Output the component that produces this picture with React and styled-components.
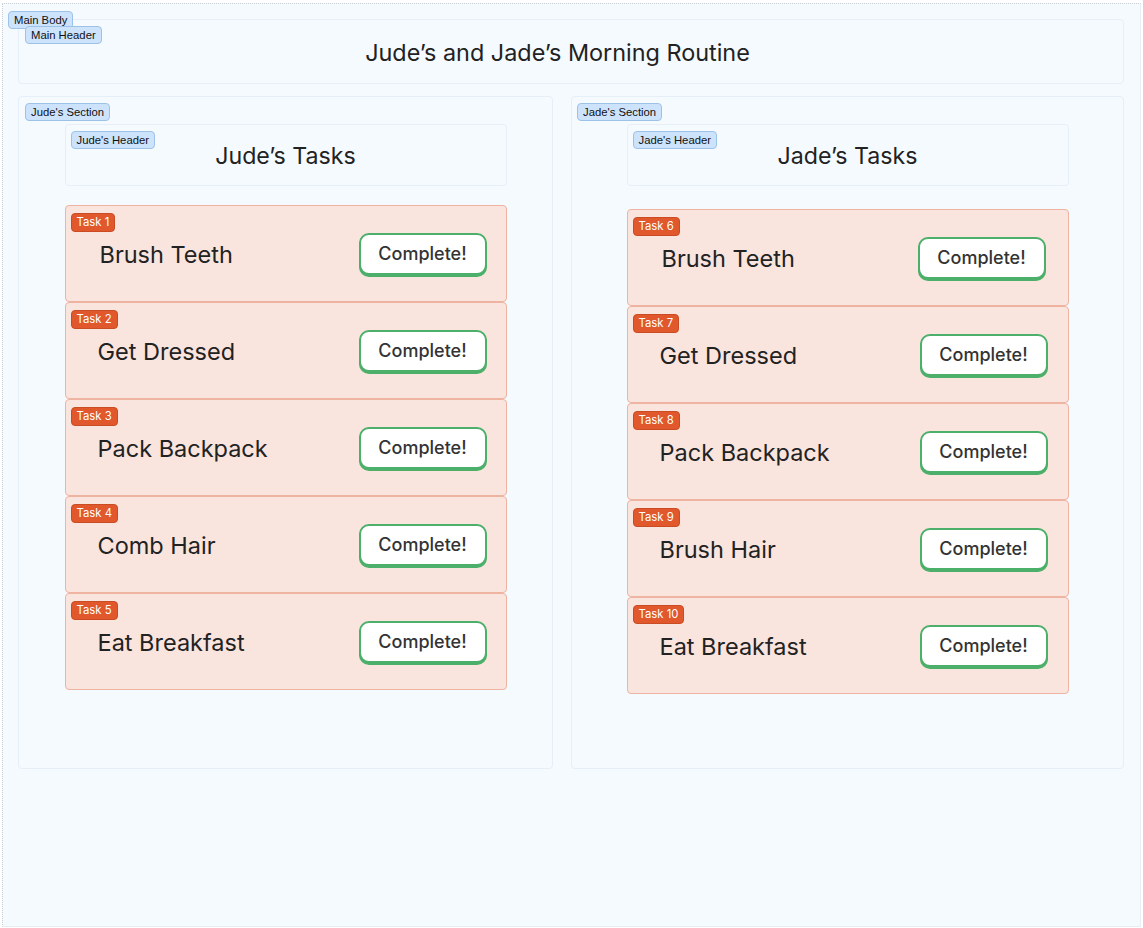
import React from "react";
import styled, { createGlobalStyle } from "styled-components";

const Global = createGlobalStyle`
  html, body { margin: 0; padding: 0; background: #ffffff; }
  body { font-family: Inter, "Noto Sans", Arial, sans-serif; color: #222; }
`;

const Page = styled.div`
  width: 1143px;
  height: 928px;
  padding: 2px;
  box-sizing: border-box;
`;

const MainBody = styled.div`
  position: relative;
  box-sizing: border-box;
  width: 1139px;
  height: 924px;
  margin-top: 1px;
  background: #f5faff;
  border-top: 1px dotted #c9ced6;
  border-left: 1px dotted #c9ced6;
  border-right: 1px solid #e8eef6;
  border-bottom: 1px solid #e8eef6;
  padding: 15px 16px 0 15px;
  display: flex;
  flex-direction: column;
  gap: 12px;
`;

const Tag = styled.span`
  position: absolute;
  left: ${(p) => p.$left ?? 6}px;
  top: ${(p) => p.$top ?? 6}px;
  z-index: 2;
  font-family: "Liberation Sans", Arial, sans-serif;
  font-size: 11.3px;
  line-height: 16px;
  padding: 0 5px;
  background: #cde3fb;
  border: 1px solid #9dc2e8;
  border-radius: 4px;
  color: #111;
  white-space: nowrap;
`;

const Box = styled.div`
  position: relative;
  box-sizing: border-box;
  background: #f5faff;
  border: 1px solid #e6eef7;
  border-radius: 4px;
`;

const MainHeader = styled(Box)`
  height: 65px;
  display: flex;
  align-items: center;
  justify-content: center;
  padding-right: 27px;
`;

const Title = styled.h1`
  margin: 0;
  font-size: 23.4px;
  font-weight: 400;
  color: #222;
  transform: translateY(1px);
`;

const Sections = styled.div`
  display: flex;
  gap: 18px;
`;

const Section = styled(Box)`
  width: ${(p) => p.$width}px;
  height: 673px;
  padding-top: 27px;
  display: flex;
  flex-direction: column;
  align-items: center;
  gap: ${(p) => p.$gap}px;
`;

const SectionHeader = styled(Box)`
  width: 442px;
  height: 62px;
  display: flex;
  align-items: center;
  justify-content: center;
`;

const SubTitle = styled.h2`
  margin: 0;
  font-size: 23.2px;
  font-weight: 400;
  color: #222;
  transform: translateY(1px);
`;

const TaskList = styled.div`
  width: 442px;
  display: flex;
  flex-direction: column;
`;

const Task = styled.div`
  position: relative;
  box-sizing: border-box;
  height: 97px;
  background: #f9e4de;
  border: 1px solid #efb3a1;
  border-radius: 4px;
  display: flex;
  align-items: center;
  justify-content: space-between;
  padding: 2px ${(p) => p.$right}px 0 ${(p) => p.$indent}px;
`;

const TaskTag = styled.span`
  position: absolute;
  left: 5px;
  top: 7px;
  font-family: Inter, Arial, sans-serif;
  font-size: 11.3px;
  line-height: 17px;
  padding: 0 5px;
  background: #e0582b;
  border: 1px solid #c94c22;
  border-radius: 4px;
  color: #fff;
`;

const TaskName = styled.span`
  font-size: 23.5px;
  color: #222;
`;

const CompleteButton = styled.button`
  box-sizing: border-box;
  width: 128px;
  height: 42px;
  background: #fff;
  border: 2px solid #4caf6a;
  border-radius: 10px;
  box-shadow: 0 2px 0 #4caf6a;
  font-family: Inter, Arial, sans-serif;
  font-size: 18px;
  font-weight: 500;
  color: #333;
  cursor: pointer;
  padding: 0;
  margin-top: -2px;
`;

const jude = ["Brush Teeth", "Get Dressed", "Pack Backpack", "Comb Hair", "Eat Breakfast"];
const jade = ["Brush Teeth", "Get Dressed", "Pack Backpack", "Brush Hair", "Eat Breakfast"];

function TaskColumn({ tasks, start, right, firstRight }) {
  return (
    <TaskList>
      {tasks.map((t, i) => (
        <Task key={i} $indent={i === 0 ? 34 : 32} $right={i === 0 ? firstRight : right}>
          <TaskTag>Task {start + i}</TaskTag>
          <TaskName>{t}</TaskName>
          <CompleteButton>Complete!</CompleteButton>
        </Task>
      ))}
    </TaskList>
  );
}

export default function App() {
  return (
    <>
      <Global />
      <Page>
        <MainBody>
          <Tag $left={5} $top={7}>Main Body</Tag>
          <MainHeader>
            <Tag $left={6} $top={6}>Main Header</Tag>
            <Title>Jude’s and Jade’s Morning Routine</Title>
          </MainHeader>
          <Sections>
            <Section $width={535} $gap={19}>
              <Tag $left={6} $top={6}>Jude's Section</Tag>
              <SectionHeader>
                <Tag $left={5} $top={6}>Jude's Header</Tag>
                <SubTitle>Jude’s Tasks</SubTitle>
              </SectionHeader>
              <TaskColumn tasks={jude} start={1} right={19} firstRight={19} />
            </Section>
            <Section $width={553} $gap={23}>
              <Tag $left={5} $top={6}>Jade's Section</Tag>
              <SectionHeader>
                <Tag $left={5} $top={6}>Jade's Header</Tag>
                <SubTitle>Jade’s Tasks</SubTitle>
              </SectionHeader>
              <TaskColumn tasks={jade} start={6} right={20} firstRight={22} />
            </Section>
          </Sections>
        </MainBody>
      </Page>
    </>
  );
}
